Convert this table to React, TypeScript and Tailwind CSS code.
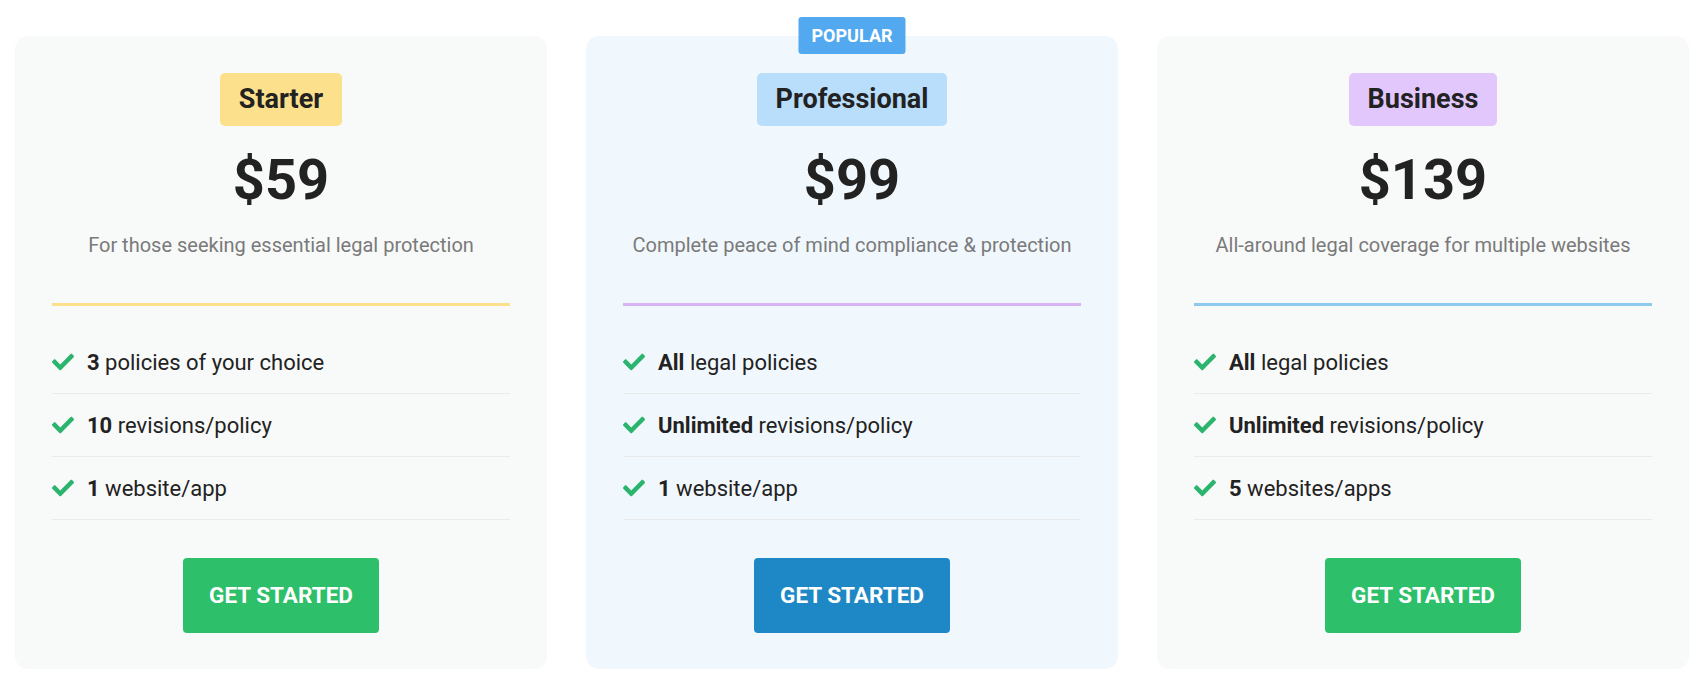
import React from "react";
import { FaCheck } from "react-icons/fa";

type Plan = {
  name: string;
  badgeBg: string;
  price: string;
  desc: string;
  lineBg: string;
  cardBg: string;
  btnBg: string;
  popular?: boolean;
  features: { b: string; t: string }[];
};

const plans: Plan[] = [
  {
    name: "Starter",
    badgeBg: "bg-[#fde08b]",
    price: "$59",
    desc: "For those seeking essential legal protection",
    lineBg: "bg-[#fde08b]",
    cardBg: "bg-[#f8f9f9]",
    btnBg: "bg-[#2dbf69]",
    features: [
      { b: "3", t: "policies of your choice" },
      { b: "10", t: "revisions/policy" },
      { b: "1", t: "website/app" },
    ],
  },
  {
    name: "Professional",
    badgeBg: "bg-[#b8defc]",
    price: "$99",
    desc: "Complete peace of mind compliance & protection",
    lineBg: "bg-[#d7b5f5]",
    cardBg: "bg-[#f1f8fd]",
    btnBg: "bg-[#1e88c7]",
    popular: true,
    features: [
      { b: "All", t: "legal policies" },
      { b: "Unlimited", t: "revisions/policy" },
      { b: "1", t: "website/app" },
    ],
  },
  {
    name: "Business",
    badgeBg: "bg-[#e2c7fd]",
    price: "$139",
    desc: "All-around legal coverage for multiple websites",
    lineBg: "bg-[#8ec9f0]",
    cardBg: "bg-[#f8f9f9]",
    btnBg: "bg-[#2dbf69]",
    features: [
      { b: "All", t: "legal policies" },
      { b: "Unlimited", t: "revisions/policy" },
      { b: "5", t: "websites/apps" },
    ],
  },
];

function Card({ p }: { p: Plan }) {
  return (
    <div
      className={`relative flex-1 rounded-[13px] ${p.cardBg} px-[37px] pt-[37px] pb-[36px] flex flex-col items-center`}
    >
      {p.popular && (
        <div className="absolute left-1/2 -translate-x-1/2 top-[-19px] h-[37px] px-[13px] flex items-center rounded-[3px] bg-[#52a9f0] text-white text-[18px] font-bold">
          POPULAR
        </div>
      )}
      <div
        className={`h-[53px] px-[19px] flex items-center rounded-[5px] ${p.badgeBg} text-[#222222] text-[27px] font-bold`}
      >
        {p.name}
      </div>
      <div className="mt-[26px] text-[56px] leading-none font-bold text-[#222222]">
        {p.price}
      </div>
      <div className="mt-[23px] text-[20px] leading-[28px] text-[#7a7a7a]">
        {p.desc}
      </div>
      <div className={`mt-[44px] h-[3px] w-full ${p.lineBg}`} />
      <ul className="mt-[25px] w-full">
        {p.features.map((f, i) => (
          <li
            key={i}
            className="h-[63px] border-b border-[#e9eaea] flex items-center gap-[13px] text-[22px] text-[#222222]"
          >
            <FaCheck className="text-[#2bb46d] shrink-0" size={22} />
            <span>
              <span className="font-bold">{f.b}</span> {f.t}
            </span>
          </li>
        ))}
      </ul>
      <button
        className={`mt-[38px] h-[75px] px-[26px] rounded-[4px] ${p.btnBg} text-white text-[22.5px] font-bold uppercase`}
      >
        Get Started
      </button>
    </div>
  );
}

export default function App() {
  return (
    <div
      className="w-[1705px] h-[684px] bg-white flex items-start gap-[39px] pl-[15px] pr-[16px] pt-[36px]"
      style={{ fontFamily: "Roboto, 'Liberation Sans', sans-serif" }}
    >
      {plans.map((p) => (
        <Card key={p.name} p={p} />
      ))}
    </div>
  );
}
